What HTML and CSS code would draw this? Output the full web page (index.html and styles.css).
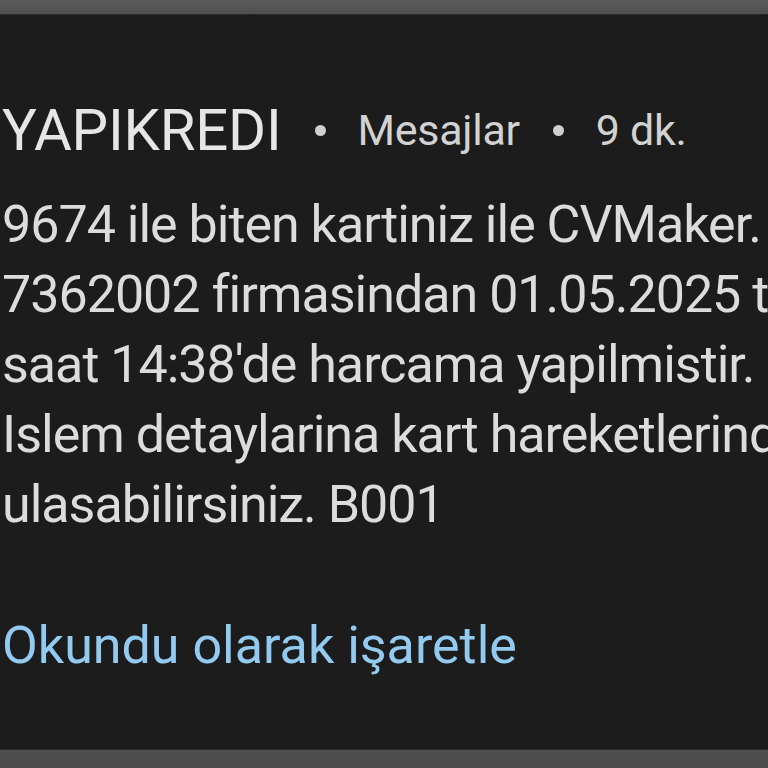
FILE: index.html
```html
<!DOCTYPE html>
<html lang="tr">
<head>
<meta charset="utf-8">
<link rel="stylesheet" href="styles.css">
</head>
<body>
<div class="screen">
  <div class="topbar"></div>
  <div class="content">
    <div class="header">
      <span class="sender">YAPIKREDI</span>
      <span class="dot"></span>
      <span class="meta">Mesajlar</span>
      <span class="dot"></span>
      <span class="meta">9 dk.</span>
    </div>
    <div class="message">
      <div class="line">9674 ile biten kartiniz ile CVMaker.</div>
      <div class="line">7362002 firmasindan 01.05.2025 tarihinde</div>
      <div class="line">saat 14:38'de harcama yapilmistir.</div>
      <div class="line">Islem detaylarina kart hareketlerinden</div>
      <div class="line">ulasabilirsiniz. B001</div>
    </div>
    <div class="action">Okundu olarak işaretle</div>
  </div>
  <div class="bottombar"></div>
</div>
</body>
</html>
```
FILE: styles.css
```css
html, body {
  margin: 0;
  padding: 0;
  background: #1c1c1c;
}
.screen {
  display: flex;
  flex-direction: column;
  height: 768px;
  overflow: hidden;
  font-family: Roboto, "Noto Sans", sans-serif;
}
.topbar {
  height: 14px;
  background: linear-gradient(#5a5a5a, #4f4f4f);
  border-bottom: 1px solid #2a2a2a;
}
.content {
  flex: 1;
  padding: 83px 0 0 2px;
  overflow: hidden;
}
.header {
  display: flex;
  align-items: center;
  height: 64px;
  white-space: nowrap;
}
.sender {
  font-size: 58px;
  color: #e6e6e6;
  letter-spacing: -0.2px;
}
.dot {
  width: 11px;
  height: 11px;
  border-radius: 50%;
  background: #cfcfcf;
  margin: 0 32px 0 33px;
}
.meta {
  font-size: 43px;
  color: #d2d2d2;
  letter-spacing: -0.3px;
}
.message {
  margin-top: 28px;
  color: #dcdcdc;
  font-size: 52px;
  line-height: 70px;
  letter-spacing: -1px;
  white-space: nowrap;
}
.action {
  margin-top: 71px;
  color: #92caf0;
  font-size: 52px;
  line-height: 70px;
  white-space: nowrap;
}
.bottombar {
  height: 18px;
  background: linear-gradient(#4e4e4e, #4a4a4a);
  border-top: 1px solid #2a2a2a;
}
```
